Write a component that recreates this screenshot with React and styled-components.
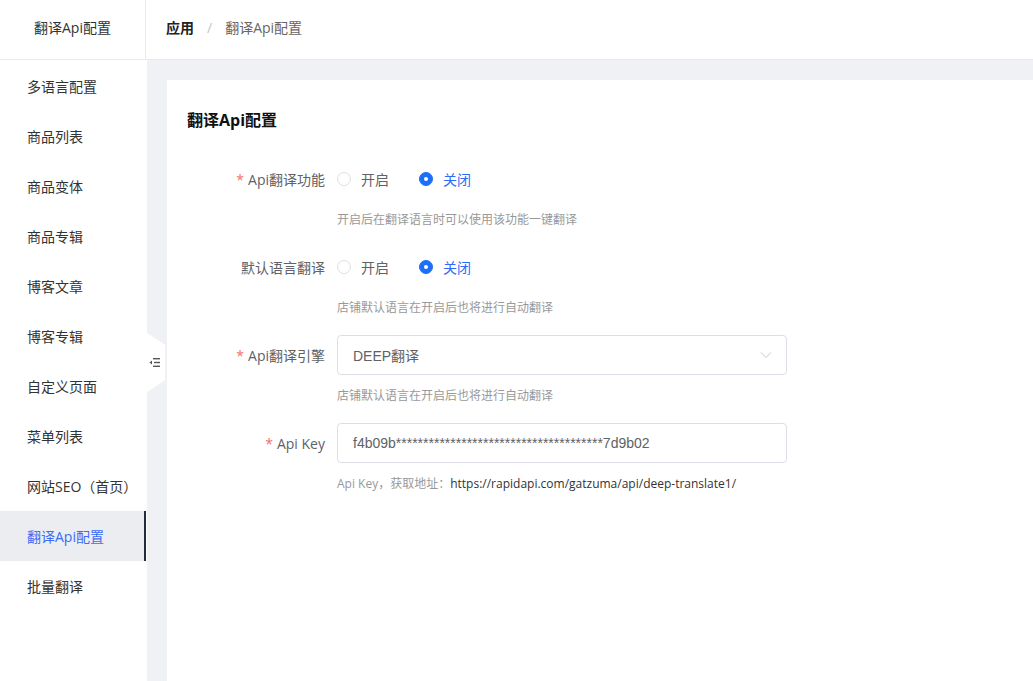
import React from "react";
import styled, { createGlobalStyle } from "styled-components";

const GlobalStyle = createGlobalStyle`
  html, body {
    margin: 0;
    padding: 0;
    background: #fff;
  }
  body {
    font-family: "Open Sans", "Noto Sans CJK SC", sans-serif;
    color: #333;
  }
`;

const menu = [
  "多语言配置",
  "商品列表",
  "商品变体",
  "商品专辑",
  "博客文章",
  "博客专辑",
  "自定义页面",
  "菜单列表",
  "网站SEO（首页）",
  "翻译Api配置",
  "批量翻译",
];

const Page = styled.div`
  height: 100vh;
  display: flex;
  flex-direction: column;
  overflow: hidden;
`;

const Header = styled.div`
  height: 59px;
  flex-shrink: 0;
  display: flex;
  border-bottom: 1px solid #e9eaee;
  background: #fff;
`;

const HeaderTitle = styled.div`
  width: 146px;
  border-right: 1px solid #e9eaee;
  display: flex;
  align-items: center;
  justify-content: center;
  padding-bottom: 5px;
  box-sizing: border-box;
  font-size: 14px;
  color: #333;
`;

const Crumbs = styled.div`
  display: flex;
  align-items: center;
  padding: 0 0 5px 20px;
  font-size: 14px;
  gap: 13px;
`;

const Crumb = styled.span`
  color: ${({ $strong }) => ($strong ? "#222" : "#666")};
  font-weight: ${({ $strong }) => ($strong ? 700 : 400)};
`;

const Slash = styled.span`
  color: #c0c4cc;
`;

const Body = styled.div`
  flex: 1;
  display: flex;
  min-height: 0;
`;

const Sidebar = styled.div`
  position: relative;
  width: 147px;
  flex-shrink: 0;
  background: #fff;
  padding-top: 1px;
`;

const MenuItem = styled.div`
  height: 50px;
  display: flex;
  align-items: center;
  padding-left: 27px;
  margin-right: 1px;
  font-size: 14px;
  color: ${({ $active }) => ($active ? "#3a6cf5" : "#333")};
  background: ${({ $active }) => ($active ? "#ebedf0" : "transparent")};
  border-right: 2px solid ${({ $active }) => ($active ? "#1f2d3d" : "transparent")};
`;

const CollapseTab = styled.div`
  position: absolute;
  top: 273px;
  left: 147px;
  width: 18px;
  height: 59px;
  background: #fff;
  clip-path: polygon(0 0, 100% 20%, 100% 80%, 0 100%);
  display: flex;
  align-items: center;
  padding-left: 2px;
  box-sizing: border-box;
`;

const Main = styled.div`
  flex: 1;
  background: #f0f1f5;
  padding: 20px 0 0 20px;
  display: flex;
  min-width: 0;
`;

const Card = styled.div`
  flex: 1;
  background: #fff;
  padding: 28px 20px 0;
`;

const CardTitle = styled.div`
  font-size: 16px;
  font-weight: 700;
  height: 24px;
  line-height: 24px;
  color: #111;
  margin-bottom: 27px;
`;

const Field = styled.div`
  display: grid;
  grid-template-columns: 150px 450px;
  grid-template-rows: 40px 18px;
  row-gap: 12px;
  margin-bottom: 18px;
`;

const Label = styled.div`
  height: 40px;
  display: flex;
  align-items: center;
  justify-content: flex-end;
  padding-right: 12px;
  font-size: 14px;
  color: #606266;
`;

const Star = styled.span`
  color: #f56c6c;
  margin-right: 4px;
`;

const Control = styled.div`
  height: 40px;
  display: flex;
  align-items: center;
`;

const Help = styled.div`
  grid-column: 2;
  font-size: 12px;
  height: 18px;
  line-height: 18px;
  color: #999;
`;

const Url = styled.span`
  color: #333;
`;

const RadioGroup = styled.div`
  display: flex;
  align-items: center;
  gap: 30px;
`;

const Radio = styled.label`
  display: flex;
  align-items: center;
  gap: 10px;
  font-size: 14px;
  color: ${({ $checked }) => ($checked ? "#2a6cf6" : "#606266")};
`;

const Dot = styled.span`
  width: 14px;
  height: 14px;
  border-radius: 50%;
  box-sizing: border-box;
  border: 1px solid ${({ $checked }) => ($checked ? "#1d6ff8" : "#dcdfe6")};
  background: ${({ $checked }) => ($checked ? "#1d6ff8" : "#fff")};
  display: flex;
  align-items: center;
  justify-content: center;
  &::after {
    content: "";
    width: 4px;
    height: 4px;
    border-radius: 50%;
    background: #fff;
    display: ${({ $checked }) => ($checked ? "block" : "none")};
  }
`;

const Box = styled.div`
  width: 450px;
  height: 40px;
  box-sizing: border-box;
  border: 1px solid #dcdfe6;
  border-radius: 4px;
  display: flex;
  align-items: center;
  justify-content: space-between;
  padding: 0 14px 0 15px;
  font-family: "Liberation Sans", "Noto Sans CJK SC", sans-serif;
  font-size: 14px;
  color: #606266;
`;

const Chevron = () => (
  <svg width="12" height="8" viewBox="0 0 12 8">
    <path d="M1 1.5 L6 6.5 L11 1.5" fill="none" stroke="#c0c4cc" strokeWidth="1" />
  </svg>
);

const IndentIcon = () => (
  <svg width="12" height="11" viewBox="0 0 12 11">
    <path d="M0.5 5.5 L3 3.5 L3 7.5 Z" fill="#555" />
    <rect x="4" y="1" width="7" height="1.4" fill="#555" />
    <rect x="5" y="4.8" width="6" height="1.4" fill="#555" />
    <rect x="4" y="8.6" width="7" height="1.4" fill="#555" />
  </svg>
);

const RadioPair = ({ value }) => (
  <RadioGroup>
    <Radio $checked={value === "on"}>
      <Dot $checked={value === "on"} />
      开启
    </Radio>
    <Radio $checked={value === "off"}>
      <Dot $checked={value === "off"} />
      关闭
    </Radio>
  </RadioGroup>
);

const App = () => {
  return (
    <Page>
      <GlobalStyle />
      <Header>
        <HeaderTitle>翻译Api配置</HeaderTitle>
        <Crumbs>
          <Crumb $strong>应用</Crumb>
          <Slash>/</Slash>
          <Crumb>翻译Api配置</Crumb>
        </Crumbs>
      </Header>
      <Body>
        <Sidebar>
          {menu.map((item) => (
            <MenuItem key={item} $active={item === "翻译Api配置"}>
              {item}
            </MenuItem>
          ))}
          <CollapseTab>
            <IndentIcon />
          </CollapseTab>
        </Sidebar>
        <Main>
          <Card>
            <CardTitle>翻译Api配置</CardTitle>

            <Field>
              <Label>
                <Star>*</Star>Api翻译功能
              </Label>
              <Control>
                <RadioPair value="off" />
              </Control>
              <Help>开启后在翻译语言时可以使用该功能一键翻译</Help>
            </Field>

            <Field>
              <Label>默认语言翻译</Label>
              <Control>
                <RadioPair value="off" />
              </Control>
              <Help>店铺默认语言在开启后也将进行自动翻译</Help>
            </Field>

            <Field>
              <Label>
                <Star>*</Star>Api翻译引擎
              </Label>
              <Control>
                <Box>
                  DEEP翻译
                  <Chevron />
                </Box>
              </Control>
              <Help>店铺默认语言在开启后也将进行自动翻译</Help>
            </Field>

            <Field>
              <Label>
                <Star>*</Star>Api Key
              </Label>
              <Control>
                <Box>f4b09b**************************************7d9b02</Box>
              </Control>
              <Help>
                Api Key，获取地址：
                <Url>https://rapidapi.com/gatzuma/api/deep-translate1/</Url>
              </Help>
            </Field>
          </Card>
        </Main>
      </Body>
    </Page>
  );
};

export default App;
